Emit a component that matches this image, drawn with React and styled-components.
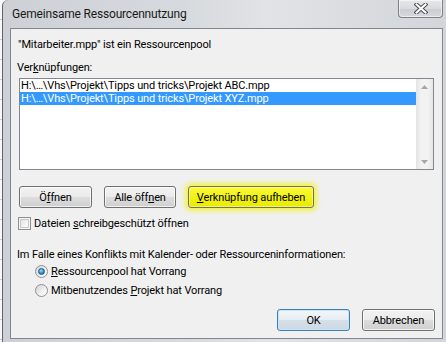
import React from 'react';
import styled, { createGlobalStyle } from 'styled-components';

const GlobalStyle = createGlobalStyle`
  html, body { margin: 0; padding: 0; }
  body {
    width: 446px;
    height: 342px;
    overflow: hidden;
    background: repeating-linear-gradient(to bottom, #f8f8f8 0 19px, #cdcdcd 19px 20px);
    font-family: Roboto, "Liberation Sans", sans-serif;
    font-size: 11px;
    letter-spacing: -0.13px;
    color: #000;
  }
`;

const Window = styled.div`
  margin-left: 2px;
  width: 444px;
  height: 342px;
  box-sizing: border-box;
  border-left: 1px solid #5f646a;
  border-top-left-radius: 6px;
  background: linear-gradient(to right, #cdd1d6 0%, #d6d9dd 40%, #e1e3e6 60%, #d2d5d9 100%);
  padding: 0 3px 3px 7px;
  display: flex;
  flex-direction: column;
`;

const TitleBar = styled.div`
  height: 28px;
  flex: none;
  display: flex;
  justify-content: space-between;
  align-items: flex-start;
`;

const Title = styled.div`
  height: 28px;
  line-height: 28px;
  padding-left: 2px;
  font-size: 12px;
  letter-spacing: -0.18px;
  color: #1a1a1a;
`;

const CloseButton = styled.div`
  width: 45px;
  height: 18px;
  box-sizing: border-box;
  border: 1px solid #7d8085;
  border-top: none;
  border-radius: 0 0 4px 4px;
  background: linear-gradient(to bottom, #e6e7e9 0%, #d9dbde 50%, #c9ccd0 51%, #d5d8dc 100%);
  box-shadow: inset 0 0 0 1px rgba(255, 255, 255, 0.55);
  display: flex;
  align-items: center;
  justify-content: center;
`;

const Client = styled.div`
  flex: 1;
  border: 1px solid #83878c;
  background: #f0f0f0;
  padding: 0 7px;
  display: flex;
  flex-direction: column;
`;

const Line = styled.div`
  height: 15px;
  line-height: 15px;
  margin-top: ${({ $top }) => $top || 0}px;
  margin-left: ${({ $left }) => $left || 0}px;
  white-space: nowrap;
`;

const ListBox = styled.div`
  margin-top: 3px;
  margin-left: 1px;
  width: 415px;
  height: 92px;
  box-sizing: border-box;
  border: 1px solid #828790;
  background: #fff;
  display: flex;
`;

const Rows = styled.div`
  flex: 1;
`;

const Row = styled.div`
  height: 13px;
  line-height: 13px;
  padding-left: 1px;
  white-space: nowrap;
  background: ${({ $selected }) => ($selected ? '#3399ff' : 'transparent')};
  color: ${({ $selected }) => ($selected ? '#fff' : '#000')};
`;

const ScrollBar = styled.div`
  width: 17px;
  background: linear-gradient(to right, #e3e3e3, #f2f2f2 30%, #f2f2f2 70%, #e6e6e6);
  display: flex;
  flex-direction: column;
  justify-content: space-between;
  align-items: center;
  padding: 6px 0 5px;
  box-sizing: border-box;
`;

const ButtonRow = styled.div`
  display: flex;
  gap: ${({ $gap }) => $gap}px;
  margin-top: ${({ $top }) => $top}px;
  margin-left: ${({ $left }) => $left || 0}px;
  justify-content: ${({ $end }) => ($end ? 'flex-end' : 'flex-start')};
`;

const Button = styled.div`
  width: ${({ $w }) => $w}px;
  height: 22px;
  box-sizing: border-box;
  border: 1px solid ${({ $default }) => ($default ? '#3c7fb1' : '#707070')};
  border-radius: 3px;
  background: ${({ $marked, $default }) =>
    $marked
      ? 'linear-gradient(to bottom, #fafa3a 0%, #f2f214 50%, #eaea00 100%)'
      : $default
      ? 'linear-gradient(to bottom, #f2f6f9 0%, #e6edf2 50%, #d6e0e8 51%, #cdd8e1 100%)'
      : 'linear-gradient(to bottom, #f2f2f2 0%, #ebebeb 50%, #dddddd 51%, #cfcfcf 100%)'};
  box-shadow: ${({ $marked, $default }) =>
    $marked
      ? '0 0 4px 3px rgba(242, 242, 20, 0.7), inset 0 0 0 1px rgba(255, 255, 150, 0.5)'
      : $default
      ? 'inset 0 0 0 1px #c6e4f7'
      : 'inset 0 0 0 1px rgba(255, 255, 255, 0.7)'};
  display: flex;
  align-items: center;
  justify-content: center;
  line-height: 15px;
  white-space: nowrap;
`;

const CheckRow = styled.div`
  display: flex;
  align-items: center;
  height: 15px;
  margin-top: ${({ $top }) => $top}px;
  margin-left: ${({ $left }) => $left || 0}px;
  gap: ${({ $gap }) => $gap}px;
  white-space: nowrap;
`;

const CheckBox = styled.div`
  width: 13px;
  height: 13px;
  box-sizing: border-box;
  border: 1px solid #8e8f8f;
  background: linear-gradient(135deg, #dcdcdc 0%, #f4f4f4 60%, #ffffff 100%);
  box-shadow: inset 0 0 0 1px #f4f4f4, inset 0 0 0 2px #c9c9c9;
`;

const Radio = styled.div`
  width: 13px;
  height: 13px;
  box-sizing: border-box;
  border-radius: 50%;
  border: 1px solid #8e8f8f;
  background: linear-gradient(135deg, #d4d4d4 0%, #f2f2f2 60%, #ffffff 100%);
  display: flex;
  align-items: center;
  justify-content: center;
`;

const RadioDot = styled.div`
  width: 7px;
  height: 7px;
  border-radius: 50%;
  background: radial-gradient(circle at 40% 35%, #a9dcf6 0%, #2f8dc9 55%, #0d4f80 100%);
  border: 0.5px solid #1b5e8c;
  box-sizing: border-box;
`;

const U = styled.span`
  text-decoration: underline;
  text-underline-offset: 1px;
`;

const Arrow = ({ down }) => (
  <svg width="7" height="4" viewBox="0 0 7 4">
    <path d={down ? 'M0 0 H7 L3.5 4 Z' : 'M0 4 H7 L3.5 0 Z'} fill="#a7a7a7" />
  </svg>
);

const CloseGlyph = () => (
  <svg width="14" height="11" viewBox="0 0 14 11">
    <path d="M2.5 1.5 L11.5 9.5 M11.5 1.5 L2.5 9.5" stroke="#4a4d52" strokeWidth="4" strokeLinecap="square" />
    <path d="M2.5 1.5 L11.5 9.5 M11.5 1.5 L2.5 9.5" stroke="#ffffff" strokeWidth="2" strokeLinecap="square" />
  </svg>
);

export default function App() {
  return (
    <>
      <GlobalStyle />
      <Window>
        <TitleBar>
          <Title>Gemeinsame Ressourcennutzung</Title>
          <CloseButton>
            <CloseGlyph />
          </CloseButton>
        </TitleBar>
        <Client>
          <Line $top={8}>"Mitarbeiter.mpp" ist ein Ressourcenpool</Line>
          <Line $top={8} $left={-1}>
            Ver<U>k</U>nüpfungen:
          </Line>
          <ListBox>
            <Rows>
              <Row>H:\…\Vhs\Projekt\Tipps und tricks\Projekt ABC.mpp</Row>
              <Row $selected>H:\…\Vhs\Projekt\Tipps und tricks\Projekt XYZ.mpp</Row>
            </Rows>
            <ScrollBar>
              <Arrow />
              <Arrow down />
            </ScrollBar>
          </ListBox>
          <ButtonRow $top={16} $left={1} $gap={12}>
            <Button $w={73}>
              <span>
                Ö<U>f</U>fnen
              </span>
            </Button>
            <Button $w={72}>
              <span>
                Alle öff<U>n</U>en
              </span>
            </Button>
            <Button $w={126} $marked>
              <span>
                <U>V</U>erknüpfung aufheben
              </span>
            </Button>
          </ButtonRow>
          <CheckRow $top={8} $gap={3}>
            <CheckBox />
            <span>
              Dateien <U>s</U>chreibgeschützt öffnen
            </span>
          </CheckRow>
          <Line $top={16} $left={-1}>
            Im Falle eines Konflikts mit Kalender- oder Ressourceninformationen:
          </Line>
          <CheckRow $top={2} $left={17} $gap={3}>
            <Radio>
              <RadioDot />
            </Radio>
            <span>
              <U>R</U>essourcenpool hat Vorrang
            </span>
          </CheckRow>
          <CheckRow $top={4} $left={17} $gap={3}>
            <Radio />
            <span>
              Mitbenutzendes <U>P</U>rojekt hat Vorrang
            </span>
          </CheckRow>
          <ButtonRow $top={11} $gap={12} $end>
            <Button $w={73} $default>OK</Button>
            <Button $w={73}>Abbrechen</Button>
          </ButtonRow>
        </Client>
      </Window>
    </>
  );
}
